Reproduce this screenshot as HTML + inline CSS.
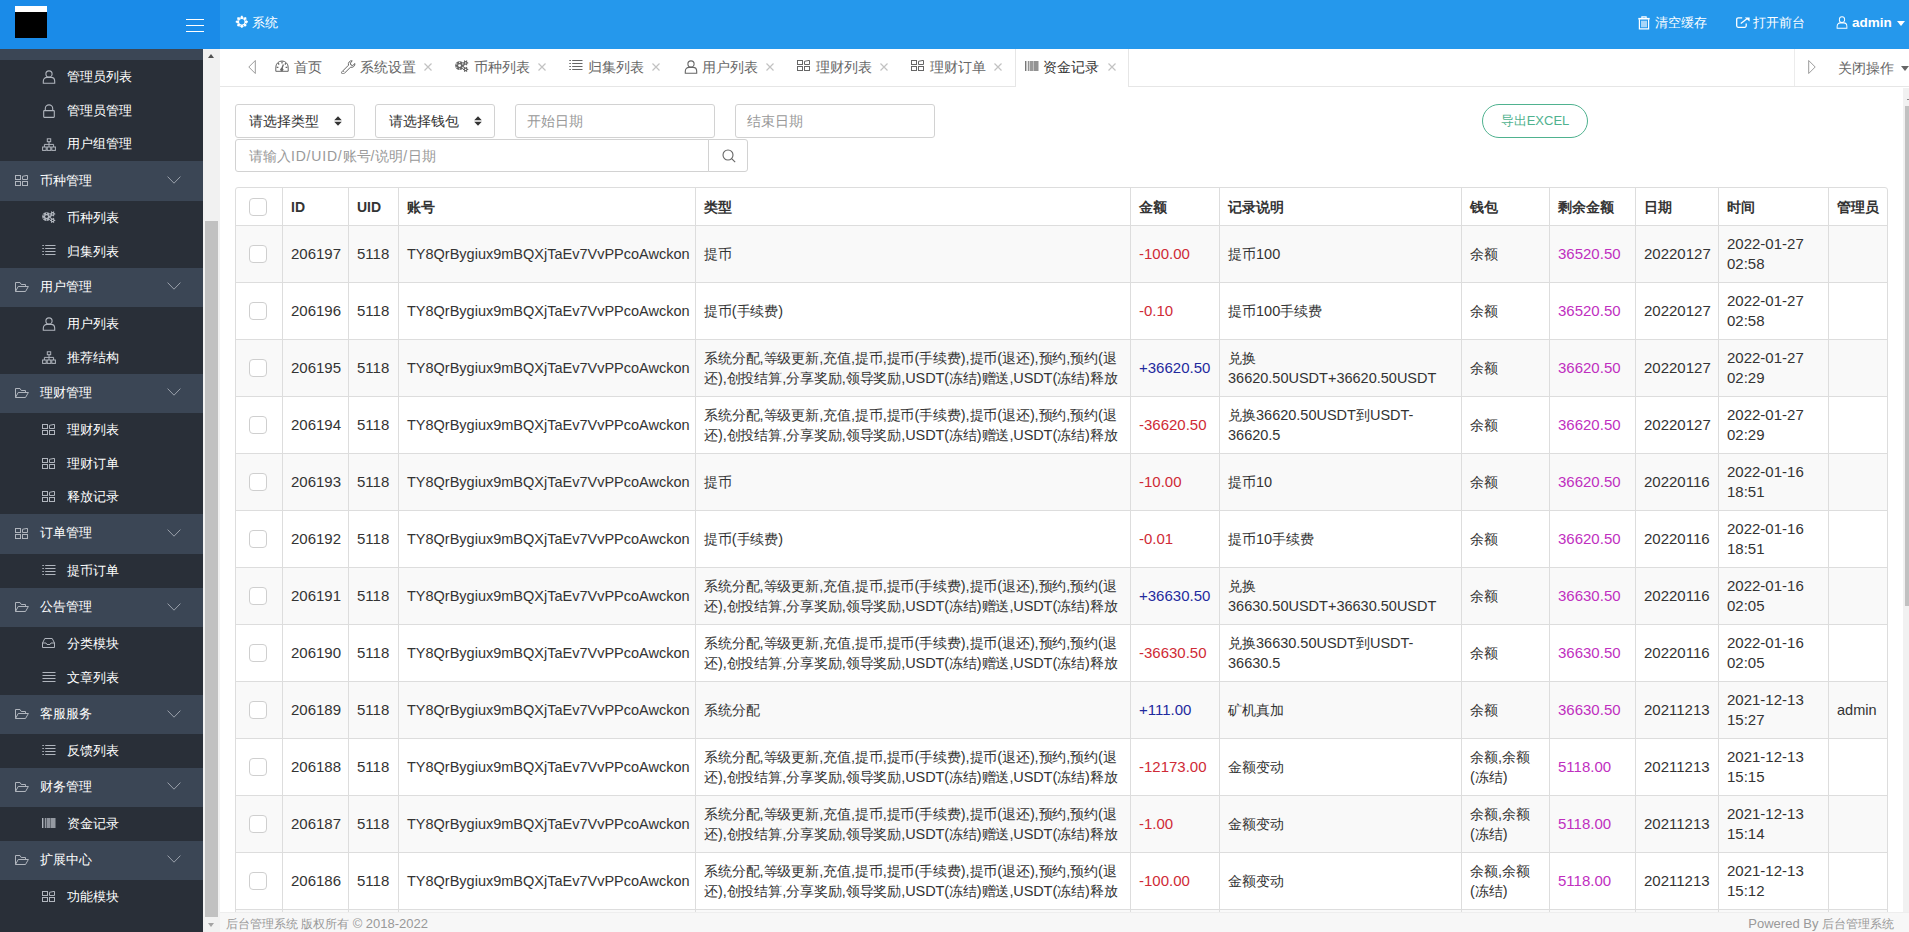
<!DOCTYPE html>
<html><head><meta charset="utf-8">
<style>
*{margin:0;padding:0;box-sizing:border-box}
html,body{width:1909px;height:932px;overflow:hidden;background:#fff;font-family:"Liberation Sans",sans-serif;color:#333}
.abs{position:absolute}
svg{display:block}
#hdr{position:absolute;left:0;top:0;width:1909px;height:49px;background:#2598ec}
#logoarea{position:absolute;left:0;top:0;width:220px;height:49px;background:#1a8be8}
#logo{position:absolute;left:15px;top:6px;width:32px;height:32px;background:#000;border-top:6px solid #fff}
.hamb{position:absolute;left:186px;width:18px;height:1px;background:#fff}
.htxt{position:absolute;top:14px;font-size:13px;line-height:18px;color:#fff;white-space:nowrap}
#side{position:absolute;left:0;top:49px;width:203px;height:883px;background:#292f38;overflow:hidden}
.par{position:absolute;left:0;width:203px;height:39.4px;background:#3b4655;color:#fff}
.chi{position:absolute;left:0;width:203px;height:33.6px;color:#fff}
.par .t{position:absolute;left:40px;top:0;line-height:39.4px;font-size:13px;white-space:nowrap}
.chi .t{position:absolute;left:67px;top:0;line-height:33.6px;font-size:13px;white-space:nowrap}
.par .ic{position:absolute;left:15px;top:13px}
.chi .ic{position:absolute;left:42px;top:10px}
.chev{position:absolute;left:167px;top:14px}
#sscroll{position:absolute;left:203px;top:49px;width:17px;height:883px;background:#f1f1f1}
#tabs{position:absolute;left:220px;top:49px;width:1689px;height:38px;background:#fff;border-bottom:1px solid #e6e6e6}
.tic{position:absolute;top:11px}
.ttx{position:absolute;top:0;font-size:14px;line-height:37px;white-space:nowrap}
.txx{position:absolute;top:14px}
.sel{position:absolute;top:104px;height:34px;border:1px solid #d2d2d2;border-radius:3px;font-size:14px;line-height:32px;color:#333;padding-left:13px;background:#fff}
.inp{position:absolute;height:34px;border:1px solid #d2d2d2;border-radius:3px;font-size:14px;line-height:32px;color:#999;padding-left:11px;background:#fff}
#excel{position:absolute;left:1482px;top:104px;width:106px;height:34px;border:1px solid #4fb28f;border-radius:17px;color:#4fb28f;font-size:13px;line-height:32px;text-align:center}
#tbl{position:absolute;left:235px;top:187px;width:1653px;border:1px solid #ddd;border-radius:3px;overflow:hidden}
.row{position:relative;display:flex;height:57px;border-top:1px solid #ddd;font-size:14.5px;line-height:20px;color:#333}
.row.h{height:37px;border-top:none;font-weight:bold;font-size:14px}
.z{font-size:14px}
.row:not(.h) .w2,.row:not(.h) .w3,.row:not(.h) .w6,.row:not(.h) .w9,.row:not(.h) .w10,.row:not(.h) .w11{font-size:15px}
.row.g{background:#f9f9f9}
.c{flex:none;display:flex;align-items:center;padding-left:8px;border-left:1px solid #ddd;white-space:nowrap}
.c:first-child{border-left:none}
.w1{width:46px}.w2{width:66px}.w3{width:50px}.w4{width:297px}.w5{width:435px;letter-spacing:-0.1px}.w6{width:89px}.w7{width:242px}.w8{width:88px}.w9{width:86px}.w10{width:83px}.w11{width:110px}.w12{width:59px}
.cb{width:18px;height:18px;border:1px solid #cfcfcf;border-radius:4px;background:#fff;margin-left:5px}
.red{color:#cf2a36}.blue{color:#1f2a9e}.mag{color:#bf2fbf}
#footer{position:absolute;left:220px;top:912px;width:1689px;height:20px;background:#f7f7f7;border-top:1px solid #eee;font-size:12px;line-height:22px;color:#999}
.fl{font-size:13px}
#mscroll{position:absolute;left:1903px;top:88px;width:6px;height:824px;background:#f1f1f1}

.ls{letter-spacing:0.8px}

</style></head><body>
<div id="hdr">
  <div id="logoarea">
    <div id="logo"></div>
    <div class="hamb" style="top:19px"></div>
    <div class="hamb" style="top:25px"></div>
    <div class="hamb" style="top:31px"></div>
  </div>
  <div class="abs" style="left:235px;top:15px"><svg width="14" height="14" viewBox="0 0 14 14"><path d="M11.90 5.77 L12.86 6.07 L12.86 7.53 L11.90 7.83 L11.13 9.67 L11.60 10.57 L10.57 11.60 L9.67 11.13 L7.83 11.90 L7.53 12.86 L6.07 12.86 L5.77 11.90 L3.93 11.13 L3.03 11.60 L2.00 10.57 L2.47 9.67 L1.70 7.83 L0.74 7.53 L0.74 6.07 L1.70 5.77 L2.47 3.93 L2.00 3.03 L3.03 2.00 L3.93 2.47 L5.77 1.70 L6.07 0.74 L7.53 0.74 L7.83 1.70 L9.67 2.47 L10.57 2.00 L11.60 3.03 L11.13 3.93 Z" fill="#fff"/><circle cx="6.8" cy="6.8" r="2.7" fill="#2598ec"/><circle cx="10.77" cy="8.45" r="0.55" fill="#2598ec"/><circle cx="8.45" cy="10.77" r="0.55" fill="#2598ec"/><circle cx="5.15" cy="10.77" r="0.55" fill="#2598ec"/><circle cx="2.83" cy="8.45" r="0.55" fill="#2598ec"/><circle cx="2.83" cy="5.15" r="0.55" fill="#2598ec"/><circle cx="5.15" cy="2.83" r="0.55" fill="#2598ec"/><circle cx="8.45" cy="2.83" r="0.55" fill="#2598ec"/><circle cx="10.77" cy="5.15" r="0.55" fill="#2598ec"/></svg></div>
  <div class="htxt" style="left:252px">系统</div>
  <div class="abs" style="left:1638px;top:16px"><svg width="12" height="14" viewBox="0 0 12 14" fill="none" stroke="#fff" stroke-width="1.2" ><path d="M3.9 2.2 V0.8 h4.2 V2.2"/><path d="M0.3 2.7 h11.4" stroke-width="1.6"/><path d="M1.4 3.3 V12.9 h9.2 V3.3"/><path d="M4 4.8 v6.4 M6 4.8 v6.4 M8 4.8 v6.4"/></svg></div>
  <div class="htxt" style="left:1655px">清空缓存</div>
  <div class="abs" style="left:1736px;top:17px"><svg width="14" height="11" viewBox="0 0 14 11" fill="none" stroke="#fff" stroke-width="1.3"><path d="M6.2 0.8 H2.2 a1.5 1.5 0 0 0 -1.5 1.5 v6.5 a1.5 1.5 0 0 0 1.5 1.5 h6.5 a1.5 1.5 0 0 0 1.5 -1.5 V6.5"/><path d="M4.8 6.6 L11.6 1.2"/><path d="M8.8 0.4 H13.6 V4.6 Z" fill="#fff" stroke="none"/></svg></div>
  <div class="htxt" style="left:1753px">打开前台</div>
  <div class="abs" style="left:1836px;top:16px"><svg width="12" height="13" viewBox="0 0 14 14" fill="none" stroke="#fff" stroke-width="1.1" preserveAspectRatio="none"><circle cx="7" cy="4" r="3.1"/><path d="M1.3 13.2 v-1.9 c0-2.3 1.7-3.9 3.7-3.9 h4 c2 0 3.7 1.6 3.7 3.9 v1.9 z"/></svg></div>
  <div class="htxt" style="left:1852px;font-size:13.5px;font-weight:bold">admin</div>
  <div class="abs" style="left:1897px;top:21px"><svg width="8" height="5" viewBox="0 0 8 5"><path d="M0 0 h8 l-4 5 z" fill="#fff"/></svg></div>
</div>
<div id="side">
<div class="par" style="top:-28.00px;height:39.00px"><div class="ic" style="top:14.00px"><svg width="14" height="11" viewBox="0 0 14 11" fill="none" stroke="#b0b5bd" stroke-width="1.0" ><path d="M0.5 9.5 V0.5 H5 L6.2 2.5 H10.5 V4.5"/><path d="M0.5 9.5 L3.2 4.5 H13.4 L10.5 9.5 Z"/></svg></div><div class="t" style="line-height:38.00px">系统管理</div><div class="chev" style="top:15.00px"><svg width="14" height="8" viewBox="0 0 14 8" fill="none" stroke="#9aa1ab" stroke-width="1.0" ><path d="M0.6 0.6 L7 7.2 L13.4 0.6"/></svg></div></div>
<div class="chi" style="top:11.00px;height:33.67px"><div class="ic" style="top:10.00px"><svg width="14" height="14" viewBox="0 0 14 14" fill="none" stroke="#b0b5bd" stroke-width="1.1" preserveAspectRatio="none"><circle cx="7" cy="4" r="3.1"/><path d="M1.3 13.2 v-1.9 c0-2.3 1.7-3.9 3.7-3.9 h4 c2 0 3.7 1.6 3.7 3.9 v1.9 z"/></svg></div><div class="t" style="line-height:33.67px">管理员列表</div></div>
<div class="chi" style="top:44.67px;height:33.66px"><div class="ic" style="top:10.33px"><svg width="14" height="14" viewBox="0 0 14 14" fill="none" stroke="#b0b5bd" stroke-width="1.1" ><path d="M3.3 6.6 V4.6 a3.7 3.7 0 0 1 7.4 0 V6.6"/><rect x="1.7" y="6.6" width="10.6" height="6.8" rx="0.6"/></svg></div><div class="t" style="line-height:33.66px">管理员管理</div></div>
<div class="chi" style="top:78.33px;height:33.67px"><div class="ic" style="top:10.67px"><svg width="14" height="13" viewBox="0 0 14 13" fill="none" stroke="#b0b5bd" stroke-width="1.0" ><rect x="5.3" y="0.8" width="3.4" height="2.9"/><rect x="0.6" y="9" width="3.6" height="3.4"/><rect x="5.2" y="9" width="3.6" height="3.4"/><rect x="9.8" y="9" width="3.6" height="3.4"/><path d="M7 3.7 v5.3 M2.4 9 v-2.6 h9.2 V9"/></svg></div><div class="t" style="line-height:33.67px">用户组管理</div></div>
<div class="par" style="top:112.00px;height:40.00px"><div class="ic" style="top:14.00px"><svg width="14" height="12" viewBox="0 0 14 12" fill="none" stroke="#b0b5bd" stroke-width="1.0" ><rect x="0.5" y="0.5" width="5" height="4"/><rect x="0.5" y="6.5" width="5" height="4"/><rect x="7.5" y="6.5" width="5" height="4"/><path d="M7.5 4.5 V1.3 L12.5 0.3 V4.5 Z"/></svg></div><div class="t" style="line-height:39.00px">币种管理</div><div class="chev" style="top:15.00px"><svg width="14" height="8" viewBox="0 0 14 8" fill="none" stroke="#9aa1ab" stroke-width="1.0" ><path d="M0.6 0.6 L7 7.2 L13.4 0.6"/></svg></div></div>
<div class="chi" style="top:152.00px;height:33.50px"><div class="ic" style="top:10.00px"><svg width="14" height="13" viewBox="0 0 14 13"><circle cx="4.6" cy="5.6" r="4.4" fill="#b0b5bd"/><circle cx="4.6" cy="5.6" r="1.4" fill="#292f38"/><circle cx="7.46" cy="7.25" r="0.6" fill="#292f38"/><circle cx="4.60" cy="8.90" r="0.6" fill="#292f38"/><circle cx="1.74" cy="7.25" r="0.6" fill="#292f38"/><circle cx="1.74" cy="3.95" r="0.6" fill="#292f38"/><circle cx="4.60" cy="2.30" r="0.6" fill="#292f38"/><circle cx="7.46" cy="3.95" r="0.6" fill="#292f38"/><path d="M12.42 2.34 L13.26 2.42 L13.26 3.38 L12.42 3.46 L11.99 4.19 L12.35 4.96 L11.51 5.44 L11.02 4.75 L10.18 4.75 L9.69 5.44 L8.85 4.96 L9.21 4.19 L8.78 3.46 L7.94 3.38 L7.94 2.42 L8.78 2.34 L9.21 1.61 L8.85 0.84 L9.69 0.36 L10.18 1.05 L11.02 1.05 L11.51 0.36 L12.35 0.84 L11.99 1.61 Z" fill="#b0b5bd"/><circle cx="10.6" cy="2.9" r="0.7" fill="#292f38"/><path d="M12.42 8.84 L13.26 8.92 L13.26 9.88 L12.42 9.96 L11.99 10.69 L12.35 11.46 L11.51 11.94 L11.02 11.25 L10.18 11.25 L9.69 11.94 L8.85 11.46 L9.21 10.69 L8.78 9.96 L7.94 9.88 L7.94 8.92 L8.78 8.84 L9.21 8.11 L8.85 7.34 L9.69 6.86 L10.18 7.55 L11.02 7.55 L11.51 6.86 L12.35 7.34 L11.99 8.11 Z" fill="#b0b5bd"/><circle cx="10.6" cy="9.4" r="0.7" fill="#292f38"/></svg></div><div class="t" style="line-height:33.50px">币种列表</div></div>
<div class="chi" style="top:185.50px;height:33.50px"><div class="ic" style="top:10.50px"><svg width="14" height="11" viewBox="0 0 14 11" fill="none" stroke="#b0b5bd" stroke-width="1.0" ><path d="M0.3 0.5 h1.6 M0.3 3.5 h1.6 M0.3 6.5 h1.6 M0.3 9.5 h1.6 M3.2 0.5 h10.3 M3.2 3.5 h10.3 M3.2 6.5 h10.3 M3.2 9.5 h10.3"/></svg></div><div class="t" style="line-height:33.50px">归集列表</div></div>
<div class="par" style="top:219.00px;height:39.00px"><div class="ic" style="top:14.00px"><svg width="14" height="11" viewBox="0 0 14 11" fill="none" stroke="#b0b5bd" stroke-width="1.0" ><path d="M0.5 9.5 V0.5 H5 L6.2 2.5 H10.5 V4.5"/><path d="M0.5 9.5 L3.2 4.5 H13.4 L10.5 9.5 Z"/></svg></div><div class="t" style="line-height:38.00px">用户管理</div><div class="chev" style="top:14.00px"><svg width="14" height="8" viewBox="0 0 14 8" fill="none" stroke="#9aa1ab" stroke-width="1.0" ><path d="M0.6 0.6 L7 7.2 L13.4 0.6"/></svg></div></div>
<div class="chi" style="top:258.00px;height:33.50px"><div class="ic" style="top:10.00px"><svg width="14" height="14" viewBox="0 0 14 14" fill="none" stroke="#b0b5bd" stroke-width="1.1" preserveAspectRatio="none"><circle cx="7" cy="4" r="3.1"/><path d="M1.3 13.2 v-1.9 c0-2.3 1.7-3.9 3.7-3.9 h4 c2 0 3.7 1.6 3.7 3.9 v1.9 z"/></svg></div><div class="t" style="line-height:33.50px">用户列表</div></div>
<div class="chi" style="top:291.50px;height:33.50px"><div class="ic" style="top:10.50px"><svg width="14" height="13" viewBox="0 0 14 13" fill="none" stroke="#b0b5bd" stroke-width="1.0" ><rect x="5.3" y="0.8" width="3.4" height="2.9"/><rect x="0.6" y="9" width="3.6" height="3.4"/><rect x="5.2" y="9" width="3.6" height="3.4"/><rect x="9.8" y="9" width="3.6" height="3.4"/><path d="M7 3.7 v5.3 M2.4 9 v-2.6 h9.2 V9"/></svg></div><div class="t" style="line-height:33.50px">推荐结构</div></div>
<div class="par" style="top:325.00px;height:39.00px"><div class="ic" style="top:14.00px"><svg width="14" height="11" viewBox="0 0 14 11" fill="none" stroke="#b0b5bd" stroke-width="1.0" ><path d="M0.5 9.5 V0.5 H5 L6.2 2.5 H10.5 V4.5"/><path d="M0.5 9.5 L3.2 4.5 H13.4 L10.5 9.5 Z"/></svg></div><div class="t" style="line-height:38.00px">理财管理</div><div class="chev" style="top:14.00px"><svg width="14" height="8" viewBox="0 0 14 8" fill="none" stroke="#9aa1ab" stroke-width="1.0" ><path d="M0.6 0.6 L7 7.2 L13.4 0.6"/></svg></div></div>
<div class="chi" style="top:364.00px;height:33.67px"><div class="ic" style="top:11.00px"><svg width="14" height="12" viewBox="0 0 14 12" fill="none" stroke="#b0b5bd" stroke-width="1.0" ><rect x="0.5" y="0.5" width="5" height="4"/><rect x="0.5" y="6.5" width="5" height="4"/><rect x="7.5" y="6.5" width="5" height="4"/><path d="M7.5 4.5 V1.3 L12.5 0.3 V4.5 Z"/></svg></div><div class="t" style="line-height:33.67px">理财列表</div></div>
<div class="chi" style="top:397.67px;height:33.66px"><div class="ic" style="top:11.33px"><svg width="14" height="12" viewBox="0 0 14 12" fill="none" stroke="#b0b5bd" stroke-width="1.0" ><rect x="0.5" y="0.5" width="5" height="4"/><rect x="0.5" y="6.5" width="5" height="4"/><rect x="7.5" y="6.5" width="5" height="4"/><path d="M7.5 4.5 V1.3 L12.5 0.3 V4.5 Z"/></svg></div><div class="t" style="line-height:33.66px">理财订单</div></div>
<div class="chi" style="top:431.33px;height:33.97px"><div class="ic" style="top:10.67px"><svg width="14" height="12" viewBox="0 0 14 12" fill="none" stroke="#b0b5bd" stroke-width="1.0" ><rect x="0.5" y="0.5" width="5" height="4"/><rect x="0.5" y="6.5" width="5" height="4"/><rect x="7.5" y="6.5" width="5" height="4"/><path d="M7.5 4.5 V1.3 L12.5 0.3 V4.5 Z"/></svg></div><div class="t" style="line-height:33.97px">释放记录</div></div>
<div class="par" style="top:465.30px;height:39.70px"><div class="ic" style="top:13.70px"><svg width="14" height="12" viewBox="0 0 14 12" fill="none" stroke="#b0b5bd" stroke-width="1.0" ><rect x="0.5" y="0.5" width="5" height="4"/><rect x="0.5" y="6.5" width="5" height="4"/><rect x="7.5" y="6.5" width="5" height="4"/><path d="M7.5 4.5 V1.3 L12.5 0.3 V4.5 Z"/></svg></div><div class="t" style="line-height:38.70px">订单管理</div><div class="chev" style="top:14.70px"><svg width="14" height="8" viewBox="0 0 14 8" fill="none" stroke="#9aa1ab" stroke-width="1.0" ><path d="M0.6 0.6 L7 7.2 L13.4 0.6"/></svg></div></div>
<div class="chi" style="top:505.00px;height:34.20px"><div class="ic" style="top:11.00px"><svg width="14" height="11" viewBox="0 0 14 11" fill="none" stroke="#b0b5bd" stroke-width="1.0" ><path d="M0.3 0.5 h1.6 M0.3 3.5 h1.6 M0.3 6.5 h1.6 M0.3 9.5 h1.6 M3.2 0.5 h10.3 M3.2 3.5 h10.3 M3.2 6.5 h10.3 M3.2 9.5 h10.3"/></svg></div><div class="t" style="line-height:34.20px">提币订单</div></div>
<div class="par" style="top:539.20px;height:38.80px"><div class="ic" style="top:13.80px"><svg width="14" height="11" viewBox="0 0 14 11" fill="none" stroke="#b0b5bd" stroke-width="1.0" ><path d="M0.5 9.5 V0.5 H5 L6.2 2.5 H10.5 V4.5"/><path d="M0.5 9.5 L3.2 4.5 H13.4 L10.5 9.5 Z"/></svg></div><div class="t" style="line-height:37.80px">公告管理</div><div class="chev" style="top:14.80px"><svg width="14" height="8" viewBox="0 0 14 8" fill="none" stroke="#9aa1ab" stroke-width="1.0" ><path d="M0.6 0.6 L7 7.2 L13.4 0.6"/></svg></div></div>
<div class="chi" style="top:578.00px;height:34.00px"><div class="ic" style="top:11.00px"><svg width="14" height="11" viewBox="0 0 14 11" fill="none" stroke="#b0b5bd" stroke-width="1.0" ><path d="M0.5 5 L2.8 0.5 H10.2 L12.5 5 V9.5 H0.5 Z M0.5 5 H4 L5 6.5 H8 L9 5 H12.5"/></svg></div><div class="t" style="line-height:34.00px">分类模块</div></div>
<div class="chi" style="top:612.00px;height:34.00px"><div class="ic" style="top:11.00px"><svg width="14" height="12" viewBox="0 0 14 12" fill="none" stroke="#b0b5bd" stroke-width="1.0" ><path d="M0.5 0.5 h13 M0.5 3.5 h13 M0.5 6.5 h13 M0.5 9.5 h13"/></svg></div><div class="t" style="line-height:34.00px">文章列表</div></div>
<div class="par" style="top:646.00px;height:39.00px"><div class="ic" style="top:14.00px"><svg width="14" height="11" viewBox="0 0 14 11" fill="none" stroke="#b0b5bd" stroke-width="1.0" ><path d="M0.5 9.5 V0.5 H5 L6.2 2.5 H10.5 V4.5"/><path d="M0.5 9.5 L3.2 4.5 H13.4 L10.5 9.5 Z"/></svg></div><div class="t" style="line-height:38.00px">客服服务</div><div class="chev" style="top:15.00px"><svg width="14" height="8" viewBox="0 0 14 8" fill="none" stroke="#9aa1ab" stroke-width="1.0" ><path d="M0.6 0.6 L7 7.2 L13.4 0.6"/></svg></div></div>
<div class="chi" style="top:685.00px;height:34.00px"><div class="ic" style="top:11.00px"><svg width="14" height="11" viewBox="0 0 14 11" fill="none" stroke="#b0b5bd" stroke-width="1.0" ><path d="M0.3 0.5 h1.6 M0.3 3.5 h1.6 M0.3 6.5 h1.6 M0.3 9.5 h1.6 M3.2 0.5 h10.3 M3.2 3.5 h10.3 M3.2 6.5 h10.3 M3.2 9.5 h10.3"/></svg></div><div class="t" style="line-height:34.00px">反馈列表</div></div>
<div class="par" style="top:719.00px;height:39.00px"><div class="ic" style="top:14.00px"><svg width="14" height="11" viewBox="0 0 14 11" fill="none" stroke="#b0b5bd" stroke-width="1.0" ><path d="M0.5 9.5 V0.5 H5 L6.2 2.5 H10.5 V4.5"/><path d="M0.5 9.5 L3.2 4.5 H13.4 L10.5 9.5 Z"/></svg></div><div class="t" style="line-height:38.00px">财务管理</div><div class="chev" style="top:14.00px"><svg width="14" height="8" viewBox="0 0 14 8" fill="none" stroke="#9aa1ab" stroke-width="1.0" ><path d="M0.6 0.6 L7 7.2 L13.4 0.6"/></svg></div></div>
<div class="chi" style="top:758.00px;height:33.60px"><div class="ic" style="top:11.00px"><svg width="14" height="10" viewBox="0 0 14 10"><rect x="0" y="0" width="1.4" height="10" fill="#b0b5bd" opacity="1.0"/><rect x="2.8" y="0" width="1.2" height="10" fill="#b0b5bd" opacity="0.8"/><rect x="4" y="0" width="1" height="10" fill="#b0b5bd" opacity="0.35"/><rect x="5" y="0" width="3.2" height="10" fill="#b0b5bd" opacity="0.75"/><rect x="8.2" y="0" width="0.6" height="10" fill="#b0b5bd" opacity="0.4"/><rect x="8.8" y="0" width="4.7" height="10" fill="#b0b5bd" opacity="0.8"/></svg></div><div class="t" style="line-height:33.60px">资金记录</div></div>
<div class="par" style="top:791.60px;height:39.40px"><div class="ic" style="top:14.40px"><svg width="14" height="11" viewBox="0 0 14 11" fill="none" stroke="#b0b5bd" stroke-width="1.0" ><path d="M0.5 9.5 V0.5 H5 L6.2 2.5 H10.5 V4.5"/><path d="M0.5 9.5 L3.2 4.5 H13.4 L10.5 9.5 Z"/></svg></div><div class="t" style="line-height:38.40px">扩展中心</div><div class="chev" style="top:14.40px"><svg width="14" height="8" viewBox="0 0 14 8" fill="none" stroke="#9aa1ab" stroke-width="1.0" ><path d="M0.6 0.6 L7 7.2 L13.4 0.6"/></svg></div></div>
<div class="chi" style="top:831.00px;height:34.00px"><div class="ic" style="top:11.00px"><svg width="14" height="12" viewBox="0 0 14 12" fill="none" stroke="#b0b5bd" stroke-width="1.0" ><rect x="0.5" y="0.5" width="5" height="4"/><rect x="0.5" y="6.5" width="5" height="4"/><rect x="7.5" y="6.5" width="5" height="4"/><path d="M7.5 4.5 V1.3 L12.5 0.3 V4.5 Z"/></svg></div><div class="t" style="line-height:34.00px">功能模块</div></div>
</div>
<div id="sscroll"><div class="abs" style="left:5px;top:5px;width:0;height:0;border-left:3.5px solid transparent;border-right:3.5px solid transparent;border-bottom:4px solid #505050"></div><div class="abs" style="left:2px;top:172px;width:13px;height:696px;background:#c1c1c1"></div><div class="abs" style="left:5px;top:874px;width:0;height:0;border-left:3.5px solid transparent;border-right:3.5px solid transparent;border-top:4px solid #a3a3a3"></div></div>
<div id="tabs">
<div class="abs" style="left:28px;top:11px"><svg width="8" height="14" viewBox="0 0 8 14" fill="none" stroke="#9a9a9a" stroke-width="1.0" ><path d="M7.3 0.5 L0.8 7 L7.3 13.5 z"/></svg></div>
<div class="tic" style="left:55px;top:11px"><svg width="14" height="12" viewBox="0 0 14 12" fill="none" stroke="#666" stroke-width="1.0" ><path d="M0.8 11.3 V7.2 A6.2 6.2 0 0 1 13.2 7.2 V11.3 Z"/><path d="M7 1.6 v1.8 M3 3.3 l1.2 1.2 M11 3.3 l-1.2 1.2 M1.6 7.4 h1.8 M10.6 7.4 h1.8 M6.3 10 L8.4 4.6" stroke-width="1.3"/><circle cx="6.8" cy="9.6" r="1.2" fill="#666"/></svg></div>
<div class="ttx" style="left:74px;color:#666">首页</div>
<div class="tic" style="left:121px;top:11px"><svg width="15" height="14" viewBox="0 0 15 14" fill="none" stroke="#666" stroke-width="1.0" ><path d="M11.2 0.8 a3.4 3.4 0 0 0 -3.7 4.4 L1 11.7 a1.4 1.4 0 0 0 0 2 a1.4 1.4 0 0 0 2 0 L9.5 7.2 a3.4 3.4 0 0 0 4.4 -3.7 l-2.1 2 -1.9 -0.5 -0.5 -1.9 z"/><path d="M2.2 12 l0.8 -0.8"/></svg></div>
<div class="ttx" style="left:140px;color:#666">系统设置</div>
<div class="txx" style="left:204px"><svg width="8" height="8" viewBox="0 0 8 8" fill="none" stroke="#c2c2c2" stroke-width="1.2" ><path d="M0.5 0.5 L7.5 7.5 M7.5 0.5 L0.5 7.5"/></svg></div>
<div class="tic" style="left:235px;top:11px"><svg width="14" height="13" viewBox="0 0 14 13"><circle cx="4.6" cy="5.6" r="4.4" fill="#666"/><circle cx="4.6" cy="5.6" r="1.4" fill="#fff"/><circle cx="7.46" cy="7.25" r="0.6" fill="#fff"/><circle cx="4.60" cy="8.90" r="0.6" fill="#fff"/><circle cx="1.74" cy="7.25" r="0.6" fill="#fff"/><circle cx="1.74" cy="3.95" r="0.6" fill="#fff"/><circle cx="4.60" cy="2.30" r="0.6" fill="#fff"/><circle cx="7.46" cy="3.95" r="0.6" fill="#fff"/><path d="M12.42 2.34 L13.26 2.42 L13.26 3.38 L12.42 3.46 L11.99 4.19 L12.35 4.96 L11.51 5.44 L11.02 4.75 L10.18 4.75 L9.69 5.44 L8.85 4.96 L9.21 4.19 L8.78 3.46 L7.94 3.38 L7.94 2.42 L8.78 2.34 L9.21 1.61 L8.85 0.84 L9.69 0.36 L10.18 1.05 L11.02 1.05 L11.51 0.36 L12.35 0.84 L11.99 1.61 Z" fill="#666"/><circle cx="10.6" cy="2.9" r="0.7" fill="#fff"/><path d="M12.42 8.84 L13.26 8.92 L13.26 9.88 L12.42 9.96 L11.99 10.69 L12.35 11.46 L11.51 11.94 L11.02 11.25 L10.18 11.25 L9.69 11.94 L8.85 11.46 L9.21 10.69 L8.78 9.96 L7.94 9.88 L7.94 8.92 L8.78 8.84 L9.21 8.11 L8.85 7.34 L9.69 6.86 L10.18 7.55 L11.02 7.55 L11.51 6.86 L12.35 7.34 L11.99 8.11 Z" fill="#666"/><circle cx="10.6" cy="9.4" r="0.7" fill="#fff"/></svg></div>
<div class="ttx" style="left:254px;color:#666">币种列表</div>
<div class="txx" style="left:318px"><svg width="8" height="8" viewBox="0 0 8 8" fill="none" stroke="#c2c2c2" stroke-width="1.2" ><path d="M0.5 0.5 L7.5 7.5 M7.5 0.5 L0.5 7.5"/></svg></div>
<div class="tic" style="left:349px;top:11px"><svg width="14" height="11" viewBox="0 0 14 11" fill="none" stroke="#666" stroke-width="1.0" ><path d="M0.3 0.5 h1.6 M0.3 3.5 h1.6 M0.3 6.5 h1.6 M0.3 9.5 h1.6 M3.2 0.5 h10.3 M3.2 3.5 h10.3 M3.2 6.5 h10.3 M3.2 9.5 h10.3"/></svg></div>
<div class="ttx" style="left:368px;color:#666">归集列表</div>
<div class="txx" style="left:432px"><svg width="8" height="8" viewBox="0 0 8 8" fill="none" stroke="#c2c2c2" stroke-width="1.2" ><path d="M0.5 0.5 L7.5 7.5 M7.5 0.5 L0.5 7.5"/></svg></div>
<div class="tic" style="left:464px;top:11px"><svg width="14" height="14" viewBox="0 0 14 14" fill="none" stroke="#666" stroke-width="1.1" preserveAspectRatio="none"><circle cx="7" cy="4" r="3.1"/><path d="M1.3 13.2 v-1.9 c0-2.3 1.7-3.9 3.7-3.9 h4 c2 0 3.7 1.6 3.7 3.9 v1.9 z"/></svg></div>
<div class="ttx" style="left:482px;color:#666">用户列表</div>
<div class="txx" style="left:546px"><svg width="8" height="8" viewBox="0 0 8 8" fill="none" stroke="#c2c2c2" stroke-width="1.2" ><path d="M0.5 0.5 L7.5 7.5 M7.5 0.5 L0.5 7.5"/></svg></div>
<div class="tic" style="left:577px;top:11px"><svg width="14" height="12" viewBox="0 0 14 12" fill="none" stroke="#666" stroke-width="1.0" ><rect x="0.5" y="0.5" width="5" height="4"/><rect x="0.5" y="6.5" width="5" height="4"/><rect x="7.5" y="6.5" width="5" height="4"/><path d="M7.5 4.5 V1.3 L12.5 0.3 V4.5 Z"/></svg></div>
<div class="ttx" style="left:596px;color:#666">理财列表</div>
<div class="txx" style="left:660px"><svg width="8" height="8" viewBox="0 0 8 8" fill="none" stroke="#c2c2c2" stroke-width="1.2" ><path d="M0.5 0.5 L7.5 7.5 M7.5 0.5 L0.5 7.5"/></svg></div>
<div class="tic" style="left:691px;top:11px"><svg width="14" height="12" viewBox="0 0 14 12" fill="none" stroke="#666" stroke-width="1.0" ><rect x="0.5" y="0.5" width="5" height="4"/><rect x="0.5" y="6.5" width="5" height="4"/><rect x="7.5" y="6.5" width="5" height="4"/><path d="M7.5 4.5 V1.3 L12.5 0.3 V4.5 Z"/></svg></div>
<div class="ttx" style="left:710px;color:#666">理财订单</div>
<div class="txx" style="left:774px"><svg width="8" height="8" viewBox="0 0 8 8" fill="none" stroke="#c2c2c2" stroke-width="1.2" ><path d="M0.5 0.5 L7.5 7.5 M7.5 0.5 L0.5 7.5"/></svg></div>
<div class="tic" style="left:805px;top:12px"><svg width="14" height="10" viewBox="0 0 14 10"><rect x="0" y="0" width="1.4" height="10" fill="#777" opacity="1.0"/><rect x="2.8" y="0" width="1.2" height="10" fill="#777" opacity="0.8"/><rect x="4" y="0" width="1" height="10" fill="#777" opacity="0.35"/><rect x="5" y="0" width="3.2" height="10" fill="#777" opacity="0.75"/><rect x="8.2" y="0" width="0.6" height="10" fill="#777" opacity="0.4"/><rect x="8.8" y="0" width="4.7" height="10" fill="#777" opacity="0.8"/></svg></div>
<div class="ttx" style="left:823px;color:#333">资金记录</div>
<div class="txx" style="left:888px"><svg width="8" height="8" viewBox="0 0 8 8" fill="none" stroke="#c2c2c2" stroke-width="1.2" ><path d="M0.5 0.5 L7.5 7.5 M7.5 0.5 L0.5 7.5"/></svg></div>
<div class="abs" style="left:795px;top:0;width:114px;height:38px;border-left:1px solid #e6e6e6;border-right:1px solid #e6e6e6;background:transparent"></div>
<div class="abs" style="left:796px;top:37px;width:112px;height:1px;background:#fff"></div>
<div class="abs" style="left:1574px;top:0;width:1px;height:37px;background:#ececec"></div>
<div class="abs" style="left:1588px;top:11px"><svg width="8" height="14" viewBox="0 0 8 14" fill="none" stroke="#9a9a9a" stroke-width="1.0" ><path d="M0.7 0.5 L7.2 7 L0.7 13.5 z"/></svg></div>
<div class="ttx" style="left:1618px;top:1px;color:#666">关闭操作</div>
<div class="abs" style="left:1681px;top:17px"><svg width="8" height="5" viewBox="0 0 8 5"><path d="M0 0 h8 l-4 5 z" fill="#666"/></svg></div>
</div>
<div class="sel" style="left:235px;width:120px">请选择类型<div class="abs" style="left:98px;top:11px"><svg width="8" height="10" viewBox="0 0 8 10"><path d="M0.2 4.2 L4 0.2 L7.8 4.2 z M0.2 5.8 h7.6 L4 9.8 z" fill="#333"/></svg></div></div>
<div class="sel" style="left:375px;width:120px">请选择钱包<div class="abs" style="left:98px;top:11px"><svg width="8" height="10" viewBox="0 0 8 10"><path d="M0.2 4.2 L4 0.2 L7.8 4.2 z M0.2 5.8 h7.6 L4 9.8 z" fill="#333"/></svg></div></div>
<div class="inp" style="left:515px;top:104px;width:200px">开始日期</div>
<div class="inp" style="left:735px;top:104px;width:200px">结束日期</div>
<div class="inp" style="left:235px;top:139px;width:474px;height:33px;border-radius:3px 0 0 3px;line-height:33px;padding-left:13px">请输入<span class="ls">ID/UID/</span>账号<span class="ls">/</span>说明<span class="ls">/</span>日期</div>
<div class="abs" style="left:708px;top:139px;width:40px;height:33px;border:1px solid #d2d2d2;border-radius:0 3px 3px 0;background:#fff"><div class="abs" style="left:13px;top:9px"><svg width="14" height="14" viewBox="0 0 14 14" fill="none" stroke="#666" stroke-width="1.1" ><circle cx="6" cy="6" r="5"/><path d="M9.6 9.6 L13.2 13.2"/></svg></div></div>
<div id="excel">导出EXCEL</div>
<div id="tbl">
<div class="row h"><div class="c w1"><div class="cb"></div></div><div class="c w2">ID</div><div class="c w3">UID</div><div class="c w4">账号</div><div class="c w5">类型</div><div class="c w6">金额</div><div class="c w7">记录说明</div><div class="c w8">钱包</div><div class="c w9">剩余金额</div><div class="c w10">日期</div><div class="c w11">时间</div><div class="c w12">管理员</div></div>
<div class="row g"><div class="c w1"><div class="cb"></div></div><div class="c w2">206197</div><div class="c w3">5118</div><div class="c w4">TY8QrBygiux9mBQXjTaEv7VvPPcoAwckon</div><div class="c w5"><div><span class="z">提币</span></div></div><div class="c w6 red">-100.00</div><div class="c w7"><div><span class="z">提币</span>100</div></div><div class="c w8"><div><span class="z">余额</span></div></div><div class="c w9 mag">36520.50</div><div class="c w10">20220127</div><div class="c w11"><div>2022-01-27<br>02:58</div></div><div class="c w12"></div></div>
<div class="row"><div class="c w1"><div class="cb"></div></div><div class="c w2">206196</div><div class="c w3">5118</div><div class="c w4">TY8QrBygiux9mBQXjTaEv7VvPPcoAwckon</div><div class="c w5"><div><span class="z">提币</span>(<span class="z">手续费</span>)</div></div><div class="c w6 red">-0.10</div><div class="c w7"><div><span class="z">提币</span>100<span class="z">手续费</span></div></div><div class="c w8"><div><span class="z">余额</span></div></div><div class="c w9 mag">36520.50</div><div class="c w10">20220127</div><div class="c w11"><div>2022-01-27<br>02:58</div></div><div class="c w12"></div></div>
<div class="row g"><div class="c w1"><div class="cb"></div></div><div class="c w2">206195</div><div class="c w3">5118</div><div class="c w4">TY8QrBygiux9mBQXjTaEv7VvPPcoAwckon</div><div class="c w5"><div><span class="z">系统分配</span>,<span class="z">等级更新</span>,<span class="z">充值</span>,<span class="z">提币</span>,<span class="z">提币</span>(<span class="z">手续费</span>),<span class="z">提币</span>(<span class="z">退还</span>),<span class="z">预约</span>,<span class="z">预约</span>(<span class="z">退</span><br><span class="z">还</span>),<span class="z">创投结算</span>,<span class="z">分享奖励</span>,<span class="z">领导奖励</span>,USDT(<span class="z">冻结</span>)<span class="z">赠送</span>,USDT(<span class="z">冻结</span>)<span class="z">释放</span></div></div><div class="c w6 blue">+36620.50</div><div class="c w7"><div><span class="z">兑换</span><br>36620.50USDT+36620.50USDT</div></div><div class="c w8"><div><span class="z">余额</span></div></div><div class="c w9 mag">36620.50</div><div class="c w10">20220127</div><div class="c w11"><div>2022-01-27<br>02:29</div></div><div class="c w12"></div></div>
<div class="row"><div class="c w1"><div class="cb"></div></div><div class="c w2">206194</div><div class="c w3">5118</div><div class="c w4">TY8QrBygiux9mBQXjTaEv7VvPPcoAwckon</div><div class="c w5"><div><span class="z">系统分配</span>,<span class="z">等级更新</span>,<span class="z">充值</span>,<span class="z">提币</span>,<span class="z">提币</span>(<span class="z">手续费</span>),<span class="z">提币</span>(<span class="z">退还</span>),<span class="z">预约</span>,<span class="z">预约</span>(<span class="z">退</span><br><span class="z">还</span>),<span class="z">创投结算</span>,<span class="z">分享奖励</span>,<span class="z">领导奖励</span>,USDT(<span class="z">冻结</span>)<span class="z">赠送</span>,USDT(<span class="z">冻结</span>)<span class="z">释放</span></div></div><div class="c w6 red">-36620.50</div><div class="c w7"><div><span class="z">兑换</span>36620.50USDT<span class="z">到</span>USDT-<br>36620.5</div></div><div class="c w8"><div><span class="z">余额</span></div></div><div class="c w9 mag">36620.50</div><div class="c w10">20220127</div><div class="c w11"><div>2022-01-27<br>02:29</div></div><div class="c w12"></div></div>
<div class="row g"><div class="c w1"><div class="cb"></div></div><div class="c w2">206193</div><div class="c w3">5118</div><div class="c w4">TY8QrBygiux9mBQXjTaEv7VvPPcoAwckon</div><div class="c w5"><div><span class="z">提币</span></div></div><div class="c w6 red">-10.00</div><div class="c w7"><div><span class="z">提币</span>10</div></div><div class="c w8"><div><span class="z">余额</span></div></div><div class="c w9 mag">36620.50</div><div class="c w10">20220116</div><div class="c w11"><div>2022-01-16<br>18:51</div></div><div class="c w12"></div></div>
<div class="row"><div class="c w1"><div class="cb"></div></div><div class="c w2">206192</div><div class="c w3">5118</div><div class="c w4">TY8QrBygiux9mBQXjTaEv7VvPPcoAwckon</div><div class="c w5"><div><span class="z">提币</span>(<span class="z">手续费</span>)</div></div><div class="c w6 red">-0.01</div><div class="c w7"><div><span class="z">提币</span>10<span class="z">手续费</span></div></div><div class="c w8"><div><span class="z">余额</span></div></div><div class="c w9 mag">36620.50</div><div class="c w10">20220116</div><div class="c w11"><div>2022-01-16<br>18:51</div></div><div class="c w12"></div></div>
<div class="row g"><div class="c w1"><div class="cb"></div></div><div class="c w2">206191</div><div class="c w3">5118</div><div class="c w4">TY8QrBygiux9mBQXjTaEv7VvPPcoAwckon</div><div class="c w5"><div><span class="z">系统分配</span>,<span class="z">等级更新</span>,<span class="z">充值</span>,<span class="z">提币</span>,<span class="z">提币</span>(<span class="z">手续费</span>),<span class="z">提币</span>(<span class="z">退还</span>),<span class="z">预约</span>,<span class="z">预约</span>(<span class="z">退</span><br><span class="z">还</span>),<span class="z">创投结算</span>,<span class="z">分享奖励</span>,<span class="z">领导奖励</span>,USDT(<span class="z">冻结</span>)<span class="z">赠送</span>,USDT(<span class="z">冻结</span>)<span class="z">释放</span></div></div><div class="c w6 blue">+36630.50</div><div class="c w7"><div><span class="z">兑换</span><br>36630.50USDT+36630.50USDT</div></div><div class="c w8"><div><span class="z">余额</span></div></div><div class="c w9 mag">36630.50</div><div class="c w10">20220116</div><div class="c w11"><div>2022-01-16<br>02:05</div></div><div class="c w12"></div></div>
<div class="row"><div class="c w1"><div class="cb"></div></div><div class="c w2">206190</div><div class="c w3">5118</div><div class="c w4">TY8QrBygiux9mBQXjTaEv7VvPPcoAwckon</div><div class="c w5"><div><span class="z">系统分配</span>,<span class="z">等级更新</span>,<span class="z">充值</span>,<span class="z">提币</span>,<span class="z">提币</span>(<span class="z">手续费</span>),<span class="z">提币</span>(<span class="z">退还</span>),<span class="z">预约</span>,<span class="z">预约</span>(<span class="z">退</span><br><span class="z">还</span>),<span class="z">创投结算</span>,<span class="z">分享奖励</span>,<span class="z">领导奖励</span>,USDT(<span class="z">冻结</span>)<span class="z">赠送</span>,USDT(<span class="z">冻结</span>)<span class="z">释放</span></div></div><div class="c w6 red">-36630.50</div><div class="c w7"><div><span class="z">兑换</span>36630.50USDT<span class="z">到</span>USDT-<br>36630.5</div></div><div class="c w8"><div><span class="z">余额</span></div></div><div class="c w9 mag">36630.50</div><div class="c w10">20220116</div><div class="c w11"><div>2022-01-16<br>02:05</div></div><div class="c w12"></div></div>
<div class="row g"><div class="c w1"><div class="cb"></div></div><div class="c w2">206189</div><div class="c w3">5118</div><div class="c w4">TY8QrBygiux9mBQXjTaEv7VvPPcoAwckon</div><div class="c w5"><div><span class="z">系统分配</span></div></div><div class="c w6 blue">+111.00</div><div class="c w7"><div><span class="z">矿机真加</span></div></div><div class="c w8"><div><span class="z">余额</span></div></div><div class="c w9 mag">36630.50</div><div class="c w10">20211213</div><div class="c w11"><div>2021-12-13<br>15:27</div></div><div class="c w12">admin</div></div>
<div class="row"><div class="c w1"><div class="cb"></div></div><div class="c w2">206188</div><div class="c w3">5118</div><div class="c w4">TY8QrBygiux9mBQXjTaEv7VvPPcoAwckon</div><div class="c w5"><div><span class="z">系统分配</span>,<span class="z">等级更新</span>,<span class="z">充值</span>,<span class="z">提币</span>,<span class="z">提币</span>(<span class="z">手续费</span>),<span class="z">提币</span>(<span class="z">退还</span>),<span class="z">预约</span>,<span class="z">预约</span>(<span class="z">退</span><br><span class="z">还</span>),<span class="z">创投结算</span>,<span class="z">分享奖励</span>,<span class="z">领导奖励</span>,USDT(<span class="z">冻结</span>)<span class="z">赠送</span>,USDT(<span class="z">冻结</span>)<span class="z">释放</span></div></div><div class="c w6 red">-12173.00</div><div class="c w7"><div><span class="z">金额变动</span></div></div><div class="c w8"><div><span class="z">余额</span>,<span class="z">余额</span><br>(<span class="z">冻结</span>)</div></div><div class="c w9 mag">5118.00</div><div class="c w10">20211213</div><div class="c w11"><div>2021-12-13<br>15:15</div></div><div class="c w12"></div></div>
<div class="row g"><div class="c w1"><div class="cb"></div></div><div class="c w2">206187</div><div class="c w3">5118</div><div class="c w4">TY8QrBygiux9mBQXjTaEv7VvPPcoAwckon</div><div class="c w5"><div><span class="z">系统分配</span>,<span class="z">等级更新</span>,<span class="z">充值</span>,<span class="z">提币</span>,<span class="z">提币</span>(<span class="z">手续费</span>),<span class="z">提币</span>(<span class="z">退还</span>),<span class="z">预约</span>,<span class="z">预约</span>(<span class="z">退</span><br><span class="z">还</span>),<span class="z">创投结算</span>,<span class="z">分享奖励</span>,<span class="z">领导奖励</span>,USDT(<span class="z">冻结</span>)<span class="z">赠送</span>,USDT(<span class="z">冻结</span>)<span class="z">释放</span></div></div><div class="c w6 red">-1.00</div><div class="c w7"><div><span class="z">金额变动</span></div></div><div class="c w8"><div><span class="z">余额</span>,<span class="z">余额</span><br>(<span class="z">冻结</span>)</div></div><div class="c w9 mag">5118.00</div><div class="c w10">20211213</div><div class="c w11"><div>2021-12-13<br>15:14</div></div><div class="c w12"></div></div>
<div class="row"><div class="c w1"><div class="cb"></div></div><div class="c w2">206186</div><div class="c w3">5118</div><div class="c w4">TY8QrBygiux9mBQXjTaEv7VvPPcoAwckon</div><div class="c w5"><div><span class="z">系统分配</span>,<span class="z">等级更新</span>,<span class="z">充值</span>,<span class="z">提币</span>,<span class="z">提币</span>(<span class="z">手续费</span>),<span class="z">提币</span>(<span class="z">退还</span>),<span class="z">预约</span>,<span class="z">预约</span>(<span class="z">退</span><br><span class="z">还</span>),<span class="z">创投结算</span>,<span class="z">分享奖励</span>,<span class="z">领导奖励</span>,USDT(<span class="z">冻结</span>)<span class="z">赠送</span>,USDT(<span class="z">冻结</span>)<span class="z">释放</span></div></div><div class="c w6 red">-100.00</div><div class="c w7"><div><span class="z">金额变动</span></div></div><div class="c w8"><div><span class="z">余额</span>,<span class="z">余额</span><br>(<span class="z">冻结</span>)</div></div><div class="c w9 mag">5118.00</div><div class="c w10">20211213</div><div class="c w11"><div>2021-12-13<br>15:12</div></div><div class="c w12"></div></div>
<div class="row g"><div class="c w1"><div class="cb"></div></div><div class="c w2">206185</div><div class="c w3">5118</div><div class="c w4">TY8QrBygiux9mBQXjTaEv7VvPPcoAwckon</div><div class="c w5"><div><span class="z">提币</span></div></div><div class="c w6 red">-100.00</div><div class="c w7"><div></div></div><div class="c w8"><div><span class="z">余额</span></div></div><div class="c w9 mag">5118.00</div><div class="c w10">20211213</div><div class="c w11"><div></div></div><div class="c w12"></div></div>
</div>
<div id="mscroll"><div class="abs" style="left:4px;top:11px;width:2px;height:1px;background:#888"></div><div class="abs" style="left:2px;top:18px;width:4px;height:500px;background:#c1c1c1"></div></div>
<div id="footer"><span class="abs" style="left:6px">后台管理系统 版权所有 <span class="fl">© 2018-2022</span></span><span class="abs" style="right:15px"><span class="fl">Powered By </span>后台管理系统</span></div>
</body></html>
